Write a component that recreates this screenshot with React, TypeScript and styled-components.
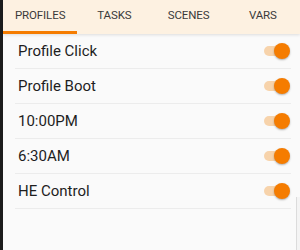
import React from 'react';
import styled, { createGlobalStyle } from 'styled-components';

const Global = createGlobalStyle`
  html, body { margin: 0; padding: 0; background: #fafafa; }
  body { font-family: Roboto, 'Noto Sans', sans-serif; }
`;

const Screen = styled.div`
  position: relative;
  width: 300px;
  height: 250px;
  overflow: hidden;
  display: flex;
  background: #fafafa;
`;

const Edge = styled.div`
  width: 3px;
  flex: none;
  background: #1c1c1c;
`;

const Main = styled.div`
  flex: 1;
  display: flex;
  flex-direction: column;
`;

const TabBar = styled.div`
  display: grid;
  grid-template-columns: repeat(4, 1fr);
  height: 34px;
  background: #fdf1e1;
  box-shadow: 0 1px 3px rgba(0, 0, 0, 0.12);
`;

const Tab = styled.div<{ $active?: boolean }>`
  display: flex;
  align-items: center;
  justify-content: center;
  font-size: 11.5px;
  color: #3a3a3a;
  text-transform: uppercase;
  letter-spacing: -0.1px;
  padding-bottom: 2px;
  border-bottom: 3px solid ${p => (p.$active ? '#f57c00' : 'transparent')};
  box-sizing: border-box;
`;

const List = styled.div`
  display: flex;
  flex-direction: column;
  padding: 0 9px 0 12px;
`;

const Row = styled.div`
  display: flex;
  align-items: center;
  justify-content: space-between;
  height: 34px;
  border-bottom: 1px solid #ececec;
  padding-left: 3px;
`;

const Label = styled.span`
  font-size: 15px;
  color: #1e1e1e;
`;

const Switch = styled.div`
  position: relative;
  width: 24px;
  height: 16px;
  margin-right: 3px;
`;

const Track = styled.div`
  position: absolute;
  left: 0;
  top: 3px;
  width: 22px;
  height: 10px;
  border-radius: 5px;
  background: #f7d3ab;
`;

const Knob = styled.div`
  position: absolute;
  right: -2px;
  top: 0;
  width: 16px;
  height: 16px;
  border-radius: 50%;
  background: #f57c00;
  box-shadow: 0 1px 2px rgba(0, 0, 0, 0.3);
`;

const ScrollEdge = styled.div`
  position: absolute;
  right: 0;
  top: 197px;
  bottom: 0;
  width: 3px;
  border-left: 1px solid #dcdcdc;
  background: #f4f4f4;
`;

const tabs = ['Profiles', 'Tasks', 'Scenes', 'Vars'];
const profiles = ['Profile Click', 'Profile Boot', '10:00PM', '6:30AM', 'HE Control'];

export default function App() {
  return (
    <Screen>
      <Global />
      <Edge />
      <Main>
        <TabBar>
          {tabs.map((t, i) => (
            <Tab key={t} $active={i === 0}>{t}</Tab>
          ))}
        </TabBar>
        <List>
          {profiles.map(p => (
            <Row key={p}>
              <Label>{p}</Label>
              <Switch>
                <Track />
                <Knob />
              </Switch>
            </Row>
          ))}
        </List>
      </Main>
      <ScrollEdge />
    </Screen>
  );
}
